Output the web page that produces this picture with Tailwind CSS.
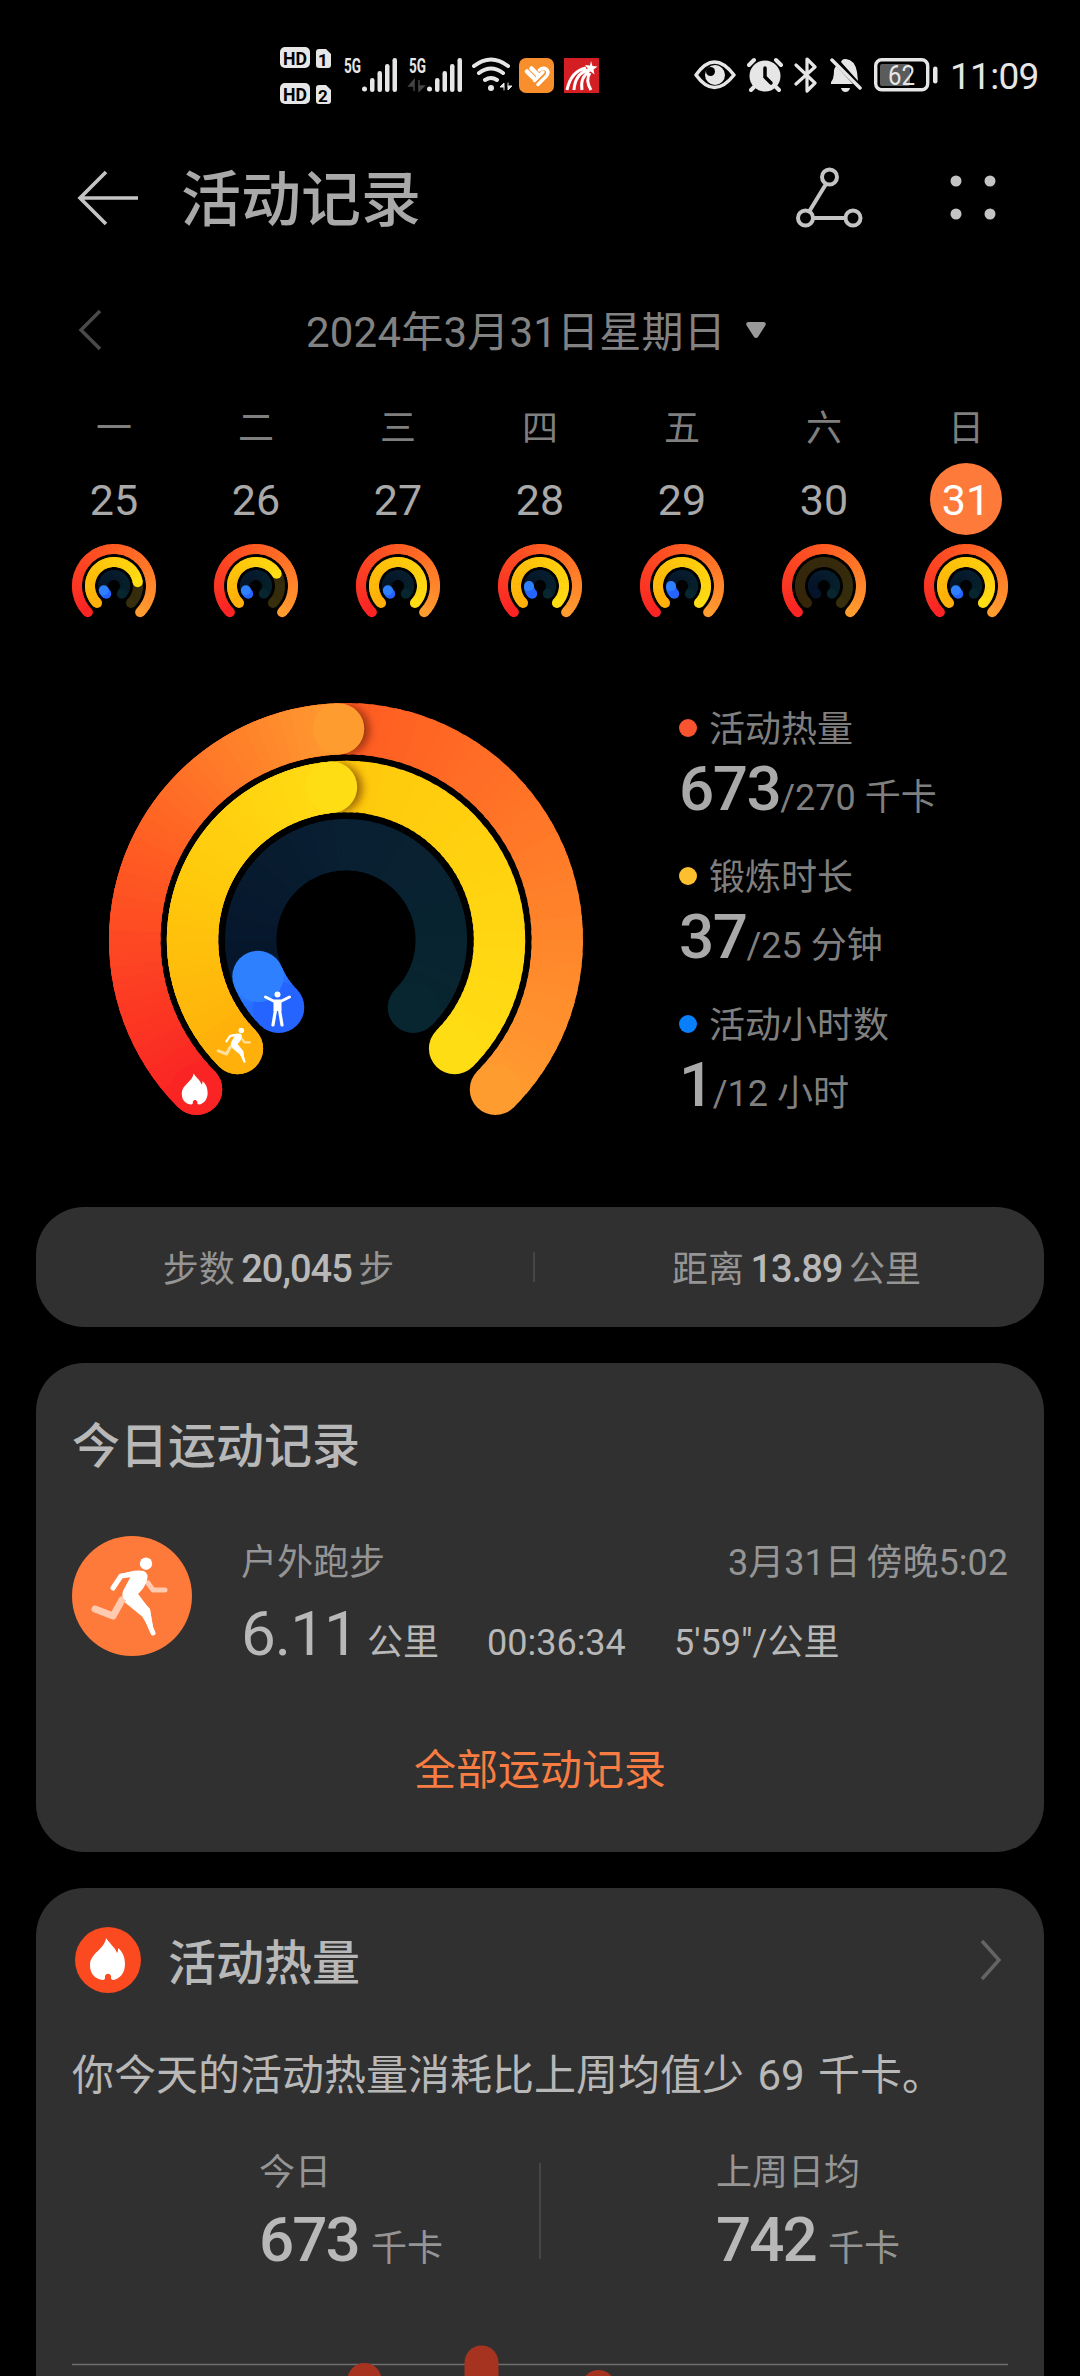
<!DOCTYPE html>
<html lang="zh-CN">

<head>
    <meta charset="UTF-8" />
    <meta name="viewport" content="width=device-width, initial-scale=1.0" />
    <title>活动记录</title>
    <script src="https://cdn.jsdelivr.net/npm/@tailwindcss/browser@4"></script>
</head>

<body class="w-[1080px] h-[2376px] overflow-hidden bg-black font-['Roboto','Noto_Sans_CJK_SC',sans-serif] leading-none text-[#a9a9a9] whitespace-nowrap">

    <!-- Status bar -->
    <div class="h-[150px] pl-[280px] pr-[42px] flex items-center text-[#e6e6e6]">
        <svg width="52" height="58" viewBox="0 0 52 58" class="mt-px overflow-visible">
            <g fill="#e6e6e6">
                <rect width="30" height="21" rx="5" />
                <rect y="36" width="30" height="21" rx="5" />
                <path d="M39 2h7l5 5v11q0 3-3 3h-9q-3 0-3-3V5q0-3 3-3z" />
                <path d="M39 38h7l5 5v11q0 3-3 3h-9q-3 0-3-3V41q0-3 3-3z" />
            </g>
            <g font-size="19" font-weight="700" text-anchor="middle">
                <text x="15" y="17.5" textLength="24" lengthAdjust="spacingAndGlyphs">HD</text>
                <text x="15" y="53.5" textLength="24" lengthAdjust="spacingAndGlyphs">HD</text>
                <text x="43" y="18.5" font-size="17">1</text>
                <text x="43" y="54.5" font-size="17">2</text>
            </g>
        </svg>
        <svg width="54" height="36" viewBox="0 0 54 36" class="ml-[12px] overflow-visible" fill="#e6e6e6">
            <text x="0" y="16" font-size="20" font-weight="700" textLength="17" lengthAdjust="spacingAndGlyphs">5G</text>
            <circle cx="20.500" cy="32" r="2.500" />
            <rect x="26" y="21" width="4.500" height="14" rx="2.200" />
            <rect x="33.500" y="14" width="4.500" height="21" rx="2.200" />
            <rect x="41" y="7" width="4.500" height="28" rx="2.200" />
            <rect x="48.500" y="1" width="4.500" height="34" rx="2.200" />
        </svg>
        <svg width="54" height="36" viewBox="0 0 54 36" class="ml-[11px] overflow-visible" fill="#e6e6e6">
            <text x="0" y="16" font-size="20" font-weight="700" textLength="17" lengthAdjust="spacingAndGlyphs">5G</text>
            <path d="M5 34V23L0 29h5M10 23v11l5-5h-5" fill="#444" stroke="#444" stroke-width="1.500" />
            <circle cx="20.500" cy="32" r="2.500" />
            <rect x="26" y="21" width="4.500" height="14" rx="2.200" />
            <rect x="33.500" y="14" width="4.500" height="21" rx="2.200" />
            <rect x="41" y="7" width="4.500" height="28" rx="2.200" />
            <rect x="48.500" y="1" width="4.500" height="34" rx="2.200" />
        </svg>
        <svg width="40" height="36" viewBox="0 0 40 36" class="ml-[9px]" fill="none" stroke="#e6e6e6" stroke-width="4" stroke-linecap="round">
            <path d="M2 9q17-13 34 0M7 16q12-9 24 0M13 23q6-4 12 0" />
            <circle cx="19" cy="31" r="3" fill="#e6e6e6" stroke="none" />
            <path d="M32 33v-7l-4 4h4M36 26v7l4-4h-4" fill="#e6e6e6" stroke-width="1" />
        </svg>
        <svg width="35" height="35" viewBox="0 0 35 35" class="ml-[7px]">
            <rect width="35" height="35" rx="7" fill="#f98f2c" />
            <g fill="none" stroke="#fff" stroke-linecap="round">
                <path d="M8 13.500l6 6M12.500 10.500l6 6" stroke-width="4.500" />
                <path d="M15.500 22.500L24 14" stroke-width="3.500" />
                <path d="M19 26.500l8.500-8.500q3-4.500-.5-7-3-2-6.500 1" stroke-width="3.500" />
            </g>
        </svg>
        <svg width="35" height="35" viewBox="0 0 35 35" class="ml-[10px]">
            <rect width="35" height="35" fill="#d31f24" />
            <path d="M27 3l1.500 5 5 .5-4 3 1 5-4-3-5 2 2.500-4.500-3-4 5 .5z" fill="#fff" />
            <path d="M22 10Q7 13 3 32M24 12Q11 16 10 32M25 14Q16 19 18 32M26 15Q21 22 27 32" fill="none" stroke="#fff" stroke-width="3" />
        </svg>

        <svg width="42" height="30" viewBox="0 0 42 30" class="ml-auto">
            <path d="M2 15Q20 -11 40 15Q20 40 2 15z" fill="none" stroke="#e6e6e6" stroke-width="3.500" stroke-linejoin="round" />
            <circle cx="21" cy="15" r="10" fill="#e6e6e6" />
            <circle cx="16.500" cy="11.500" r="4.500" fill="#000" />
        </svg>
        <svg width="36" height="36" viewBox="0 0 36 36" class="ml-[11px]" stroke-linecap="round" fill="none">
            <path d="M2 8l5-5M34 8l-5-5M7 30l-3 3M29 30l3 3" stroke="#e6e6e6" stroke-width="4" />
            <circle cx="18" cy="19" r="15.500" fill="#e6e6e6" />
            <path d="M18 11v9l6 6" stroke="#000" stroke-width="3.500" />
        </svg>
        <svg width="24" height="36" viewBox="0 0 24 36" class="ml-[11px]" fill="none" stroke="#e6e6e6" stroke-width="3.200" stroke-linecap="round" stroke-linejoin="round">
            <path d="M2 8l19 18-8 8V2l8 8L2 27" />
        </svg>
        <svg width="32" height="36" viewBox="0 0 32 36" class="ml-[12px]" fill="#e6e6e6">
            <path d="M11 5q1-3 4-3h1q9 1 11 13l1 9zM4 13q1-3 2-4l17 18H1v-2q3-3 3-12zM11 31h9q-1 4-4.500 4T11 31z" />
            <path d="M2 3l28 28" stroke="#e6e6e6" stroke-width="3.500" stroke-linecap="round" />
        </svg>
        <svg width="64" height="34" viewBox="0 0 64 34" class="ml-[12px]">
            <rect x="1.700" y="1.700" width="52" height="30" rx="6" fill="none" stroke="#e6e6e6" stroke-width="3.400" />
            <rect x="6" y="6" width="30" height="22" rx="2" fill="#5b5b5b" />
            <rect x="59" y="8.500" width="4.500" height="17" rx="2.200" fill="#e6e6e6" />
            <text x="27.500" y="27" font-size="27" text-anchor="middle" fill="#e6e6e6" textLength="27" lengthAdjust="spacingAndGlyphs">62</text>
        </svg>
        <div class="ml-[12px] mt-[3px] w-[88px] text-[37px] tracking-[-0.7px]">11:09</div>
    </div>

    <!-- Title bar -->
    <div class="h-[96px] pl-[76px] pr-[75px] flex items-center">
        <svg width="64" height="58" viewBox="0 0 64 58" fill="none" stroke="#c4c4c4" stroke-width="3.600">
            <path d="M30 3L4 29l26 26M4 29h58" />
        </svg>
        <h1 class="ml-[41px] mt-[6px] text-[60px] font-medium text-[#a9a9a9]">活动记录</h1>
        <svg width="68" height="62" viewBox="0 0 68 62" class="ml-auto" fill="none" stroke="#c4c4c4" stroke-width="4">
            <circle cx="34.500" cy="10" r="7.500" />
            <circle cx="10.500" cy="51" r="7.500" />
            <circle cx="58" cy="51" r="7.500" />
            <path d="M31 17L14.500 44M18 51h32" />
        </svg>
        <svg width="46" height="46" viewBox="0 0 46 46" class="ml-[87px] mr-[9px]" fill="#c4c4c4">
            <circle cx="6" cy="6" r="5.500" />
            <circle cx="40" cy="6" r="5.500" />
            <circle cx="6" cy="39" r="5.500" />
            <circle cx="40" cy="39" r="5.500" />
        </svg>
    </div>

    <!-- Date picker -->
    <div class="mt-[42px] h-[84px] pl-[78px] flex items-center text-[#828282]">
        <svg width="24" height="42" viewBox="0 0 24 42" fill="none" stroke="#4a4a4a" stroke-width="3.500">
            <path d="M22 2L3 21l19 19" />
        </svg>
        <div class="ml-[204px] mt-[6px] w-[416px] text-[42px] tracking-[0.2px]">2024年3月31日星期日</div>
        <svg width="22" height="18" viewBox="0 0 22 18" class="ml-[23px]" fill="#999">
            <path d="M3 1h16q3 1 1 4l-7 11q-2 2-4 0L2 5Q0 2 3 1z" />
        </svg>
    </div>

    <!-- Week -->
    <div id="week" class="mt-[14px] h-[244px] px-[43px] grid grid-cols-7"></div>

    <!-- Activity rings -->
    <div class="mt-[50px] h-[527px] flex">
        <svg id="rings" width="520" height="450" viewBox="90 680 520 450" class="ml-[90px]"></svg>
        <div class="ml-[69px] mt-[18px] text-[#7f7f7f]">
            <div class="h-[148px]">
                <div class="h-[60px] flex items-center text-[36px]">
                    <span class="size-[18px] rounded-full bg-[#f9542f] mr-[12px]"></span><span class="mt-[3px]">活动热量</span>
                </div>
                <div class="flex items-baseline text-[36px]">
                    <span class="text-[62px] font-medium text-[#a9a9a9] tracking-[-1.500px]">673</span><span>/270 千卡</span>
                </div>
            </div>
            <div class="h-[148px]">
                <div class="h-[60px] flex items-center text-[36px]">
                    <span class="size-[18px] rounded-full bg-[#fcc02e] mr-[12px]"></span><span class="mt-[3px]">锻炼时长</span>
                </div>
                <div class="flex items-baseline text-[36px]">
                    <span class="text-[62px] font-medium text-[#a9a9a9] tracking-[-1.500px]">37</span><span>/25 分钟</span>
                </div>
            </div>
            <div class="h-[148px]">
                <div class="h-[60px] flex items-center text-[36px]">
                    <span class="size-[18px] rounded-full bg-[#0a7ffb] mr-[12px]"></span><span class="mt-[3px]">活动小时数</span>
                </div>
                <div class="flex items-baseline text-[36px]">
                    <span class="text-[62px] font-medium text-[#a9a9a9] tracking-[-1.500px]">1</span><span>/12 小时</span>
                </div>
            </div>
        </div>
    </div>

    <!-- Steps and distance -->
    <div class="mx-9 h-[120px] rounded-[48px] bg-[#303030] flex items-center text-[36px] text-[#959595] [word-spacing:-2.500px]">
        <div class="w-[497px] pr-[12px] pt-[3px] text-center">步数 <span class="font-medium text-[38px] text-[#b8b8b8] tracking-[-1px]">20,045</span> 步</div>
        <div class="w-[2px] h-[30px] bg-[#464646]"></div>
        <div class="flex-1 pl-[14px] pt-[3px] text-center">距离 <span class="font-medium text-[38px] text-[#b8b8b8] tracking-[-1px]">13.89</span> 公里</div>
    </div>

    <!-- Workouts -->
    <div class="mx-9 mt-9 h-[489px] rounded-[48px] bg-[#303030] px-9 pt-[60px] text-[#b8b8b8]">
        <h2 class="text-[48px] font-medium">今日运动记录</h2>
        <div class="mt-[65px] flex">
            <svg width="120" height="120" viewBox="0 0 120 120">
                <circle cx="60" cy="60" r="60" fill="#fe7a3b" />
                <use href="#runner" />
            </svg>
            <div class="ml-[49px] flex-1">
                <div class="mt-[9px] flex justify-between text-[36px] text-[#959595]">
                    <span>户外跑步</span>
                    <span class="[word-spacing:-3px]">3月31日 傍晚5:02</span>
                </div>
                <div class="mt-[22px] flex items-baseline text-[36px]">
                    <span class="w-[126px] text-[62px] tracking-[-1px]">6.11</span>
                    <span class="w-[120px]">公里</span>
                    <span class="w-[187px]">00:36:34</span>
                    <span>5'59"/公里</span>
                </div>
            </div>
        </div>
        <div class="mt-[85px] text-center text-[42px] text-[#f97d42]">全部运动记录</div>
    </div>

    <!-- Active calories -->
    <div class="mx-9 mt-9 h-[488px] rounded-t-[48px] bg-[#303030] px-9 pt-[36px] text-[#b8b8b8]">
        <div class="h-[72px] flex items-center">
            <svg width="66" height="66" viewBox="0 0 66 66" class="ml-[3px]">
                <circle cx="33" cy="33" r="33" fill="#fb4a20" />
                <use href="#flame" transform="translate(14 11)" />
            </svg>
            <h2 class="ml-[27px] mt-[8px] text-[48px] font-medium">活动热量</h2>
            <svg width="22" height="42" viewBox="0 0 22 42" class="ml-auto mr-[6px]" fill="none" stroke="#646464" stroke-width="3.500">
                <path d="M2 2l17 19L2 40" />
            </svg>
        </div>
        <p class="mt-[59px] text-[42px] [word-spacing:3px]">你今天的活动热量消耗比上周均值少 69 千卡。</p>
        <div class="mt-[58px] flex">
            <div class="w-[467px] pl-[187px]">
                <div class="text-[36px] text-[#959595]">今日</div>
                <div class="mt-[18px] flex items-baseline">
                    <span class="w-[112px] text-[62px] font-medium tracking-[-2px]">673</span><span class="text-[36px] text-[#959595]">千卡</span>
                </div>
            </div>
            <div class="mt-[8px] w-[2px] h-[96px] bg-[#464646]"></div>
            <div class="pl-[175px]">
                <div class="text-[36px] text-[#959595]">上周日均</div>
                <div class="mt-[18px] flex items-baseline">
                    <span class="w-[112px] text-[62px] font-medium tracking-[-2px]">742</span><span class="text-[36px] text-[#959595]">千卡</span>
                </div>
            </div>
        </div>
        <svg width="936" height="36" viewBox="72 2340 936 36" class="mt-[69px]">
            <path d="M72 2364.500h936" stroke="#6e6e6e" stroke-width="1.500" />
            <g fill="#a63220">
                <rect x="347.500" y="2363" width="34" height="60" rx="17" />
                <rect x="464.500" y="2345.500" width="34" height="80" rx="17" />
                <rect x="581.500" y="2370" width="34" height="60" rx="17" />
            </g>
        </svg>
    </div>

    <svg width="0" height="0" class="absolute">
        <defs>
            <g id="runner" fill="none" stroke="#fff" stroke-linecap="round" stroke-linejoin="round">
                <path d="M76 47l5 7 12 0" stroke-width="5" opacity=".6" />
                <path d="M50 64l-9 16-18-7" stroke-width="7" opacity=".6" />
                <path d="M41 52l8-12 14-2" stroke-width="5" />
                <path d="M54 61l18 15 9 21" stroke-width="5" />
                <path d="M50 38q12-5 22-3 5 3 3 9-2 8-10 15l13 14 4 26-5-18-24-17q-4-3-2-9l9-17-10-1z" fill="#fff" stroke="none" />
                <path d="M65 58l12 16 4 22-10-16-17-14z" fill="#fff" stroke-width="2" />
                <circle cx="74" cy="27.700" r="6.200" fill="#fff" stroke="none" />
            </g>
            <path id="flame" fill="#fff" d="M17 0c3 5 9 9 11 15 1-1 1-3 1-5 5 4 7 10 7 16 0 9-5 15-12 16-1 0-2-1-2-2v-2c-1-3-5-3-6 0v2c0 1-1 2-2 2C6 41 1 36 1 27 1 15 16 11 17 0z" />
        </defs>
    </svg>

    <script>
        const mix = (a, b, t) => `rgb(${a.map((v, i) => Math.round(v + (b[i] - v) * t)).join(",")})`;
        const RED = [[250, 36, 36], [255, 92, 34], [255, 156, 48]];
        const YELLOW = [[255, 176, 10], [255, 201, 12], [255, 221, 20]];
        const NAVY = [[5, 20, 42], [9, 31, 50], [8, 38, 47]];
        const BLUE = [[38, 100, 255], [40, 115, 255], [46, 128, 255]];
        const OLIVE = [[54, 38, 10], [54, 42, 12], [54, 46, 12]];

        const colorAt = (c, t) => t < .5 ? mix(c[0], c[1], t * 2) : mix(c[1], c[2], t * 2 - 1);

        function point(cx, cy, r, deg) {
            const a = deg * Math.PI / 180;
            return [cx + r * Math.sin(a), cy - r * Math.cos(a)];
        }

        // Round-capped arc, starting lower left and running clockwise for `sweep` degrees
        function arc(cx, cy, r, w, sweep, c) {
            const n = Math.max(1, Math.ceil(sweep / 3));
            let out = "";
            for (let i = 0; i < n; i++) {
                const a = -135 + sweep * i / n;
                const b = -135 + Math.min(sweep, sweep * (i + 1) / n + 1.5);
                const [x1, y1] = point(cx, cy, r, a);
                const [x2, y2] = point(cx, cy, r, b);
                out += `<path d="M${x1} ${y1}A${r} ${r} 0 0 1 ${x2} ${y2}" fill="none" stroke="${colorAt(c, i / n)}" stroke-width="${w}"/>`;
            }
            const [sx, sy] = point(cx, cy, r, -135);
            const [ex, ey] = point(cx, cy, r, -135 + sweep);
            return out + `<circle cx="${sx}" cy="${sy}" r="${w / 2}" fill="${colorAt(c, 0)}"/><circle cx="${ex}" cy="${ey}" r="${w / 2}" fill="${colorAt(c, 1)}"/>`;
        }

        const days = [
            ["一", 25, 1, .8, 1 / 12],
            ["二", 26, 1, .72, 1 / 12],
            ["三", 27, 1, 1, 1 / 12],
            ["四", 28, 1, 1, 2 / 12],
            ["五", 29, 1, 1, 2 / 12],
            ["六", 30, 1, 0, 0],
            ["日", 31, 1, 1, 1 / 12],
        ];

        document.getElementById("week").innerHTML = days.map(([name, date, heat, train, hours], i) => `
            <div class="flex flex-col items-center">
                <div class="h-[77px] pt-[25px] text-[36px] text-[#7f7f7f]">${name}</div>
                <div class="size-[72px] rounded-full flex items-center justify-center pt-[2px] text-[43px] ${i === 6 ? "bg-[#fe7a3b] text-white" : "text-[#a9a9a9]"}">${date}</div>
                <svg width="84" height="84" viewBox="0 0 84 84" class="mt-[9px]">
                    ${arc(42, 42, 37, 10, 270 * heat, RED)}
                    ${arc(42, 42, 24, 10, 270, OLIVE)}
                    ${train ? arc(42, 42, 24, 10, 270 * train, YELLOW) : ""}
                    ${arc(42, 42, 11, 10, 270, NAVY)}
                    ${hours ? arc(42, 42, 11, 10, 270 * hours, BLUE) : ""}
                </svg>
            </div>`).join("");

        // Shadow under the leading cap of a ring on its second lap
        function shadow(id, r, deg) {
            const [x, y] = point(346, 940, r, deg);
            return `<clipPath id="${id}"><path clip-rule="evenodd" d="M${346 - r - 25.5} 940a${r + 25.5} ${r + 25.5} 0 0 1 ${2 * r + 51} 0zM${346 - r + 25.5} 940a${r - 25.5} ${r - 25.5} 0 0 1 ${2 * r - 51} 0z"/></clipPath>
                <g clip-path="url(#${id})"><circle cx="${x + 6}" cy="${y + 1}" r="24" fill="#401000" opacity=".6" filter="url(#soft)"/></g>`;
        }

        document.getElementById("rings").innerHTML = `
            <filter id="soft" x="-50%" y="-50%" width="200%" height="200%"><feGaussianBlur stdDeviation="5"/></filter>
            ${arc(346, 940, 211.3, 51.3, 270, RED)}
            ${shadow("clipOuter", 211.3, -2)}
            ${arc(346, 940, 211.3, 51.3, 133, RED)}
            ${arc(346, 940, 153.5, 51.3, 270, YELLOW)}
            ${shadow("clipMid", 153.5, -5.4)}
            ${arc(346, 940, 153.5, 51.3, 129.6, YELLOW)}
            ${arc(346, 940, 95.3, 51.3, 270, NAVY)}
            ${arc(346, 940, 95.3, 51.3, 22.5, BLUE)}
            <use href="#flame" transform="translate(181 1073.500) scale(.74)"/>
            <use href="#runner" transform="translate(208 1018) scale(.45)"/>
            <g fill="none" stroke="#fff" stroke-linecap="round" stroke-linejoin="round">
                <circle cx="277.500" cy="994.500" r="3" fill="#fff" stroke="none"/>
                <path d="M265.500 997l8 4h8l8-4" stroke-width="3"/>
                <path d="M277.500 1002v9" stroke-width="8" stroke-linecap="butt"/>
                <path d="M275.500 1010l-2.500 15M279.500 1010l2.500 15" stroke-width="3.200"/>
            </g>`;
    </script>
</body>

</html>
